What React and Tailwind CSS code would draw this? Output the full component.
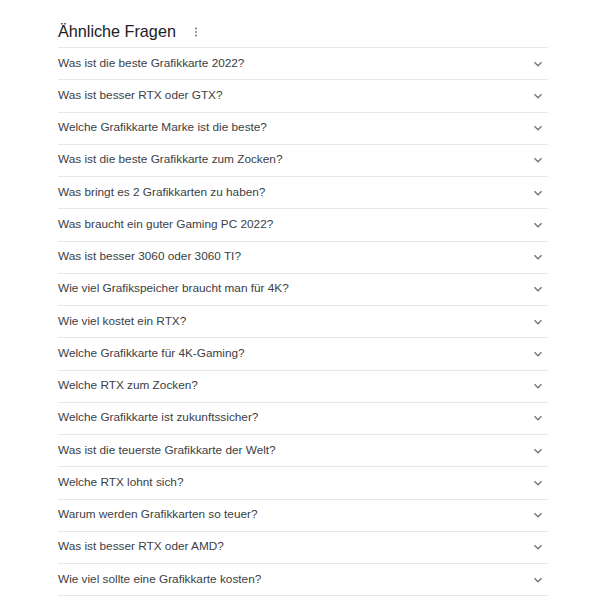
const questions = [
  "Was ist die beste Grafikkarte 2022?",
  "Was ist besser RTX oder GTX?",
  "Welche Grafikkarte Marke ist die beste?",
  "Was ist die beste Grafikkarte zum Zocken?",
  "Was bringt es 2 Grafikkarten zu haben?",
  "Was braucht ein guter Gaming PC 2022?",
  "Was ist besser 3060 oder 3060 TI?",
  "Wie viel Grafikspeicher braucht man für 4K?",
  "Wie viel kostet ein RTX?",
  "Welche Grafikkarte für 4K-Gaming?",
  "Welche RTX zum Zocken?",
  "Welche Grafikkarte ist zukunftssicher?",
  "Was ist die teuerste Grafikkarte der Welt?",
  "Welche RTX lohnt sich?",
  "Warum werden Grafikkarten so teuer?",
  "Was ist besser RTX oder AMD?",
  "Wie viel sollte eine Grafikkarte kosten?",
];

function Chevron() {
  return (
    <svg width="16" height="16" viewBox="0 0 24 24" fill="#70757a">
      <path d="M7.41 8.59L12 13.17l4.59-4.58L18 10l-6 6-6-6 1.41-1.41z" />
    </svg>
  );
}

function MoreVert() {
  return (
    <svg width="12" height="12" viewBox="0 0 24 24" fill="#70757a">
      <circle cx="12" cy="5" r="2" />
      <circle cx="12" cy="12" r="2" />
      <circle cx="12" cy="19" r="2" />
    </svg>
  );
}

export default function App() {
  return (
    <div className="w-[600px] h-[600px] bg-white font-['Liberation_Sans',Arial,sans-serif]">
      <div className="ml-[58px] w-[490px]">
        {/* header */}
        <div className="pt-[21px] pb-[6px] flex items-center">
          <h2 className="text-[16.2px] leading-[20px] text-[#202124]">
            Ähnliche Fragen
          </h2>
          <span className="ml-[14px] mt-[1px] flex items-center">
            <MoreVert />
          </span>
        </div>
        {/* question list */}
        <div className="border-b border-[#e8e8e8]">
          {questions.map((q) => (
            <div
              key={q}
              className="h-[32.25px] border-t border-[#e8e8e8] flex items-center justify-between pb-[2px]"
            >
              <span className="text-[11.8px] leading-[16px] text-[#3c4043]">
                {q}
              </span>
              <span className="mr-[2px] mt-[2px] flex items-center">
                <Chevron />
              </span>
            </div>
          ))}
        </div>
      </div>
    </div>
  );
}
